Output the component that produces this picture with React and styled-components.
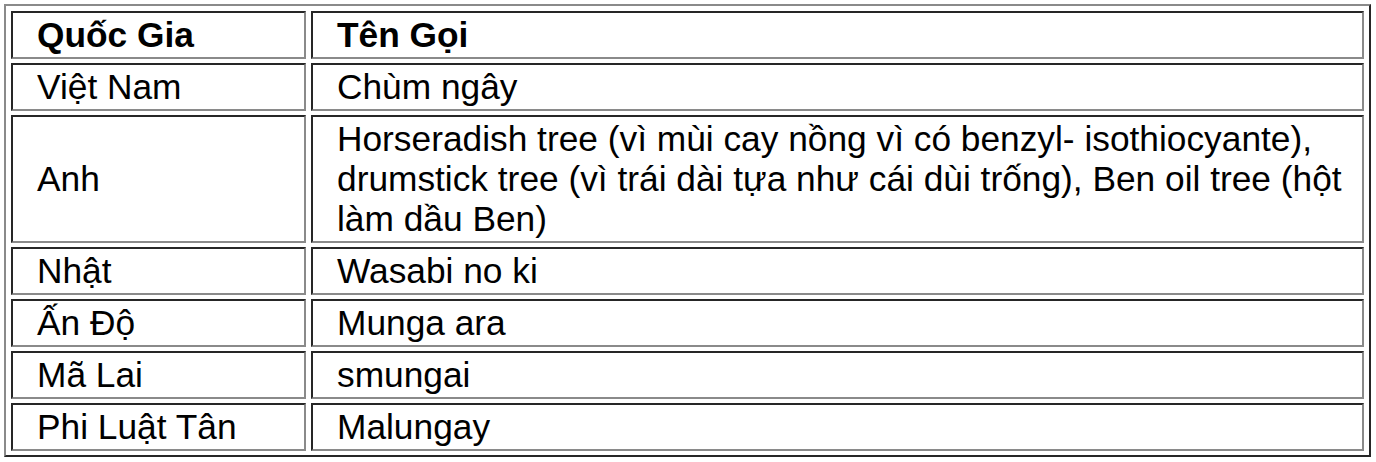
import React from 'react';
import styled, { createGlobalStyle } from 'styled-components';

const rows = [
    { country: 'Việt Nam', name: 'Chùm ngây' },
    {
        country: 'Anh',
        name: 'Horseradish tree (vì mùi cay nồng vì có benzyl- isothiocyante), drumstick tree (vì trái dài tựa như cái dùi trống), Ben oil tree (hột làm dầu Ben)',
    },
    { country: 'Nhật', name: 'Wasabi no ki' },
    { country: 'Ấn Độ', name: 'Munga ara' },
    { country: 'Mã Lai', name: 'smungai' },
    { country: 'Phi Luật Tân', name: 'Malungay' },
];

const GlobalStyle = createGlobalStyle`
    body{
        margin: 0;
        background: #fff;
        font-family: "Liberation Sans", Arial, sans-serif;
        color: #000;
    }
`

const Table = styled.table`
    margin: 4px;
    width: 1367px;
    border-collapse: separate;
    border-spacing: 5px 4px;
    border-style: solid;
    border-width: 2px;
    border-color: #8a8a8a #262626 #262626 #8a8a8a;
    padding: 1px 0 0;
    table-layout: fixed;
`
const Cell = styled.td`
    border-style: solid;
    border-width: 2px;
    border-color: #262626 #8a8a8a #8a8a8a #262626;
    padding: 2px 12px 2px 24px;
    font-size: 35.3px;
    line-height: 40px;
    font-weight: ${(p) => (p.$head ? 700 : 400)};
    vertical-align: middle;
    width: ${(p) => (p.$first ? '255px' : 'auto')};
`

const App = () => {
    return (
        <>
            <GlobalStyle />
            <Table>
                <tbody>
                    <tr>
                        <Cell $head $first>Quốc Gia</Cell>
                        <Cell $head>Tên Gọi</Cell>
                    </tr>
                    {rows.map((row) => (
                        <tr key={row.country}>
                            <Cell $first>{row.country}</Cell>
                            <Cell>{row.name}</Cell>
                        </tr>
                    ))}
                </tbody>
            </Table>
        </>
    )
}

export default App;
